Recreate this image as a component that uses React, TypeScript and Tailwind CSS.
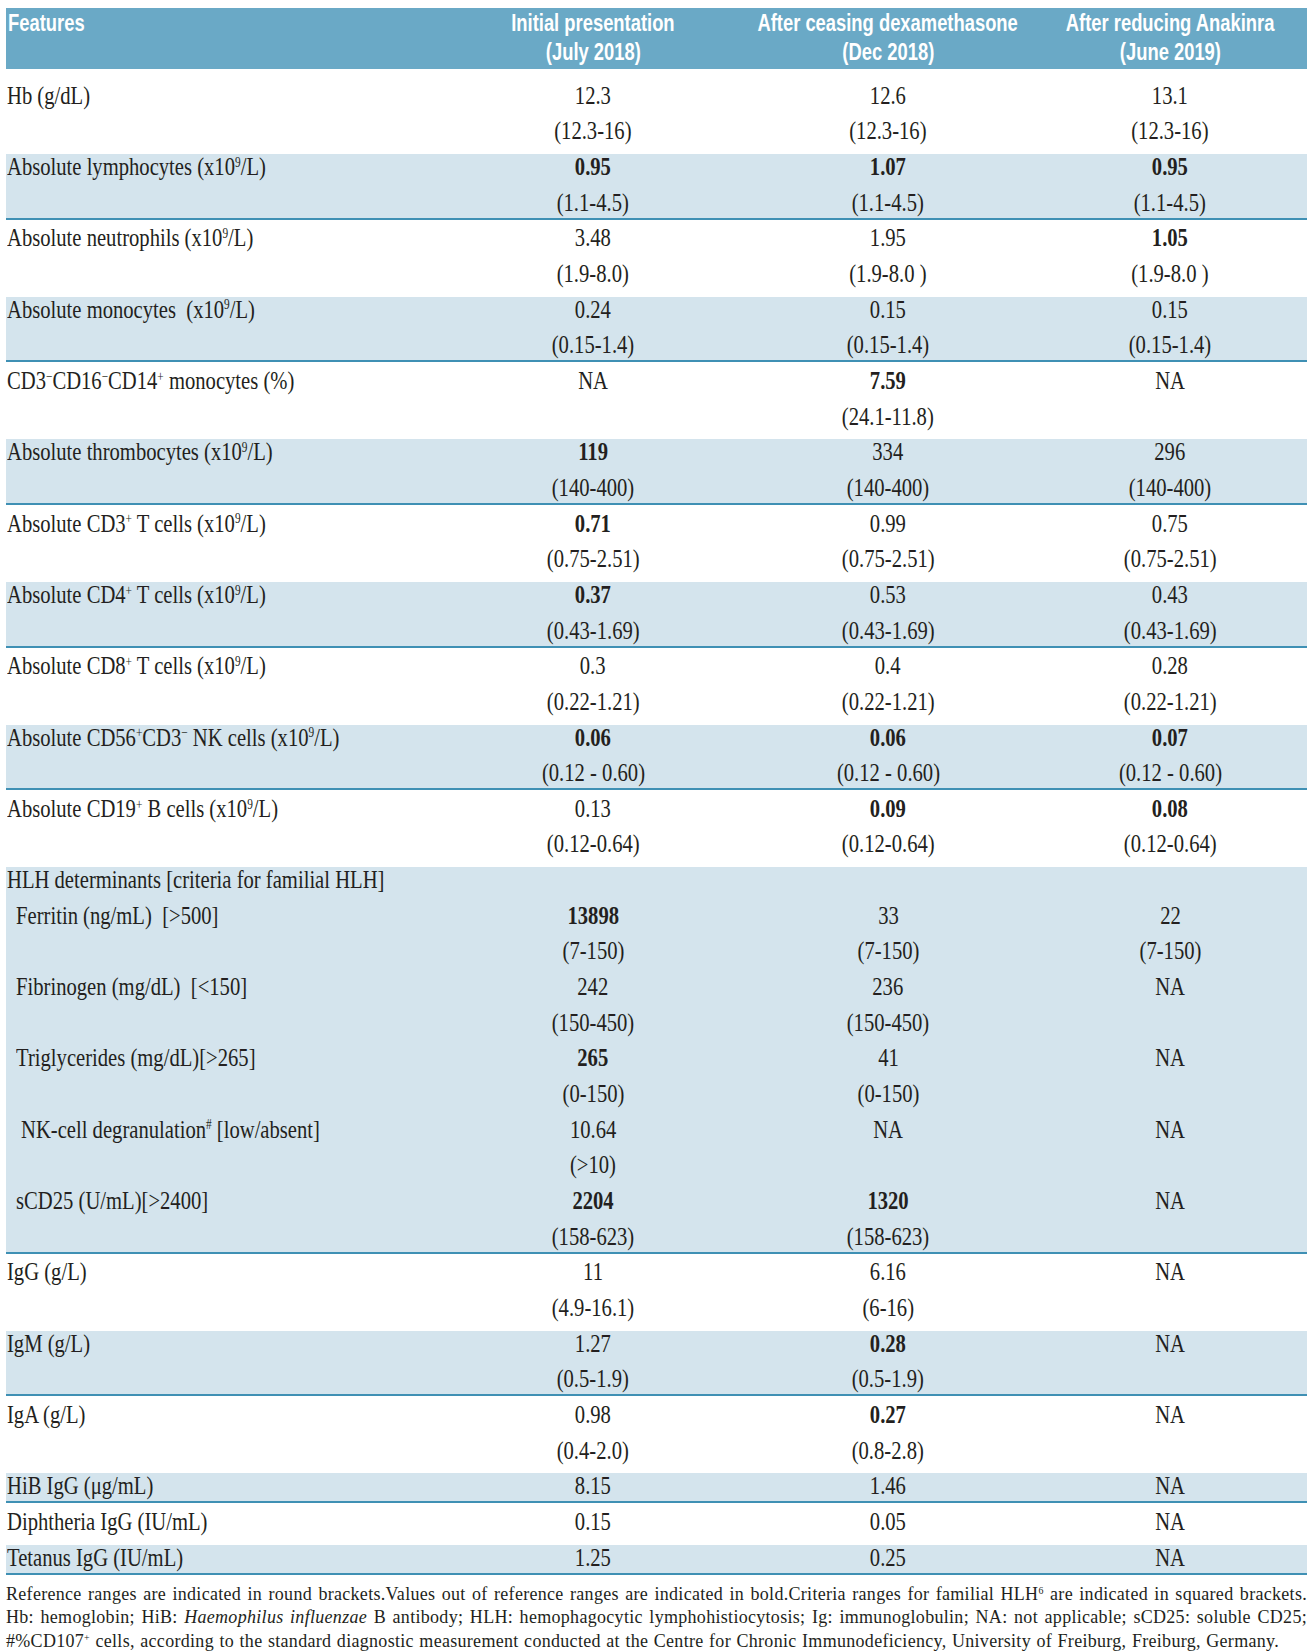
import React from "react";

type LineData = [React.ReactNode, string, string, string];
type RowData = { lines: LineData[]; blue: boolean; first?: boolean };

const Sup = ({ children }: { children: React.ReactNode }) => (
  <sup className="relative -top-[0.6em] align-baseline text-[0.55em] leading-none">{children}</sup>
);

const x109 = (
  <>
    (x10<Sup>9</Sup>/L)
  </>
);

const rows: RowData[] = [
  {
    first: true,
    blue: false,
    lines: [
      ["Hb (g/dL)", "12.3", "12.6", "13.1"],
      ["", "(12.3-16)", "(12.3-16)", "(12.3-16)"],
    ],
  },
  {
    blue: true,
    lines: [
      [<>Absolute lymphocytes {x109}</>, "*0.95", "*1.07", "*0.95"],
      ["", "(1.1-4.5)", "(1.1-4.5)", "(1.1-4.5)"],
    ],
  },
  {
    blue: false,
    lines: [
      [<>Absolute neutrophils {x109}</>, "3.48", "1.95", "*1.05"],
      ["", "(1.9-8.0)", "(1.9-8.0 )", "(1.9-8.0 )"],
    ],
  },
  {
    blue: true,
    lines: [
      [<>Absolute monocytes&nbsp; {x109}</>, "0.24", "0.15", "0.15"],
      ["", "(0.15-1.4)", "(0.15-1.4)", "(0.15-1.4)"],
    ],
  },
  {
    blue: false,
    lines: [
      [
        <>
          CD3<Sup>−</Sup>CD16<Sup>−</Sup>CD14<Sup>+</Sup> monocytes (%)
        </>,
        "NA",
        "*7.59",
        "NA",
      ],
      ["", "", "(24.1-11.8)", ""],
    ],
  },
  {
    blue: true,
    lines: [
      [<>Absolute thrombocytes {x109}</>, "*119", "334", "296"],
      ["", "(140-400)", "(140-400)", "(140-400)"],
    ],
  },
  {
    blue: false,
    lines: [
      [<>Absolute CD3<Sup>+</Sup> T cells {x109}</>, "*0.71", "0.99", "0.75"],
      ["", "(0.75-2.51)", "(0.75-2.51)", "(0.75-2.51)"],
    ],
  },
  {
    blue: true,
    lines: [
      [<>Absolute CD4<Sup>+</Sup> T cells {x109}</>, "*0.37", "0.53", "0.43"],
      ["", "(0.43-1.69)", "(0.43-1.69)", "(0.43-1.69)"],
    ],
  },
  {
    blue: false,
    lines: [
      [<>Absolute CD8<Sup>+</Sup> T cells {x109}</>, "0.3", "0.4", "0.28"],
      ["", "(0.22-1.21)", "(0.22-1.21)", "(0.22-1.21)"],
    ],
  },
  {
    blue: true,
    lines: [
      [
        <>
          Absolute CD56<Sup>+</Sup>CD3<Sup>−</Sup> NK cells {x109}
        </>,
        "*0.06",
        "*0.06",
        "*0.07",
      ],
      ["", "(0.12 - 0.60)", "(0.12 - 0.60)", "(0.12 - 0.60)"],
    ],
  },
  {
    blue: false,
    lines: [
      [<>Absolute CD19<Sup>+</Sup> B cells {x109}</>, "0.13", "*0.09", "*0.08"],
      ["", "(0.12-0.64)", "(0.12-0.64)", "(0.12-0.64)"],
    ],
  },
  {
    blue: true,
    lines: [
      ["HLH determinants [criteria for familial HLH]", "", "", ""],
      [<span className="pl-[11px]">Ferritin (ng/mL)&nbsp; [&gt;500]</span>, "*13898", "33", "22"],
      ["", "(7-150)", "(7-150)", "(7-150)"],
      [<span className="pl-[11px]">Fibrinogen (mg/dL)&nbsp; [&lt;150]</span>, "242", "236", "NA"],
      ["", "(150-450)", "(150-450)", ""],
      [<span className="pl-[11px]">Triglycerides (mg/dL)[&gt;265]</span>, "*265", "41", "NA"],
      ["", "(0-150)", "(0-150)", ""],
      [
        <span className="pl-[17px]">
          NK-cell degranulation<Sup>#</Sup> [low/absent]
        </span>,
        "10.64",
        "NA",
        "NA",
      ],
      ["", "(>10)", "", ""],
      [<span className="pl-[11px]">sCD25 (U/mL)[&gt;2400]</span>, "*2204", "*1320", "NA"],
      ["", "(158-623)", "(158-623)", ""],
    ],
  },
  {
    blue: false,
    lines: [
      ["IgG (g/L)", "11", "6.16", "NA"],
      ["", "(4.9-16.1)", "(6-16)", ""],
    ],
  },
  {
    blue: true,
    lines: [
      ["IgM (g/L)", "1.27", "*0.28", "NA"],
      ["", "(0.5-1.9)", "(0.5-1.9)", ""],
    ],
  },
  {
    blue: false,
    lines: [
      ["IgA (g/L)", "0.98", "*0.27", "NA"],
      ["", "(0.4-2.0)", "(0.8-2.8)", ""],
    ],
  },
  { blue: true, lines: [["HiB IgG (μg/mL)", "8.15", "1.46", "NA"]] },
  { blue: false, lines: [["Diphtheria IgG (IU/mL)", "0.15", "0.05", "NA"]] },
  { blue: true, lines: [["Tetanus IgG (IU/mL)", "1.25", "0.25", "NA"]] },
];

const GRID = "grid grid-cols-[437px_300px_290px_274px]";

function ValueCell({ v }: { v: string }) {
  const bold = v.startsWith("*");
  const text = bold ? v.slice(1) : v;
  return (
    <div className="text-center whitespace-nowrap">
      {text ? (
        <span
          className={
            bold
              ? "inline-block origin-center scale-x-[0.825] font-bold"
              : "inline-block origin-center scale-x-[0.825]"
          }
        >
          {text}
        </span>
      ) : null}
    </div>
  );
}

function Line({ line }: { line: LineData }) {
  return (
    <div className={`${GRID} h-[26px] leading-[26px]`}>
      <div className="whitespace-nowrap pl-[1px]">
        <span className="inline-block origin-left scale-x-[0.825]">{line[0]}</span>
      </div>
      <ValueCell v={line[1]} />
      <ValueCell v={line[2]} />
      <ValueCell v={line[3]} />
    </div>
  );
}

function Row({ row }: { row: RowData }) {
  const cls = row.blue
    ? "bg-[#d4e4ed] border-b-2 border-[#3f90b4] pb-[2px]"
    : row.first
    ? "pt-[13.3px] pb-[9.67px]"
    : "pt-[5.67px] pb-[9.67px]";
  return (
    <div className={cls}>
      <div className="flex flex-col gap-[9.67px]">
        {row.lines.map((l, i) => (
          <Line key={i} line={l} />
        ))}
      </div>
    </div>
  );
}

function HeadCell({ a, b }: { a: string; b: string }) {
  return (
    <div className="flex flex-col items-center">
      <span className="inline-block origin-center scale-x-[0.75] whitespace-nowrap">{a}</span>
      <span className="inline-block origin-center scale-x-[0.75] whitespace-nowrap">{b}</span>
    </div>
  );
}

export default function App() {
  return (
    <div className="min-h-[1651px] bg-white pt-[8.4px] pl-[6px] text-[#231f20]">
      <div className="w-[1301px]">
        <div
          className={`${GRID} h-[61px] bg-[#6aa9c6] text-white font-bold text-[24.5px] leading-[29px] [font-family:'Liberation_Sans',Arial,sans-serif]`}
        >
          <div className="pl-[2px]">
            <span className="inline-block origin-left scale-x-[0.75]">Features</span>
          </div>
          <HeadCell a="Initial presentation" b="(July 2018)" />
          <HeadCell a="After ceasing dexamethasone" b="(Dec 2018)" />
          <HeadCell a="After reducing Anakinra" b="(June 2019)" />
        </div>
        <div className="text-[25px] [font-family:'Liberation_Serif','Times_New_Roman',serif]">
          {rows.map((r, i) => (
            <Row key={i} row={r} />
          ))}
        </div>
        <div className="mt-[8px] text-[18px] leading-[23.5px] tracking-[0.3px] [font-family:'Liberation_Serif','Times_New_Roman',serif]">
          <div className="text-justify [text-align-last:justify]">
            Reference ranges are indicated in round brackets.Values out of reference ranges are indicated in bold.Criteria ranges for familial HLH<Sup>6</Sup> are indicated in squared brackets.
          </div>
          <div className="text-justify [text-align-last:justify]">
            Hb: hemoglobin; HiB: <i>Haemophilus influenzae</i> B antibody; HLH: hemophagocytic lymphohistiocytosis; Ig: immunoglobulin; NA: not applicable; sCD25: soluble CD25;
          </div>
          <div className="pr-[28px] text-justify [text-align-last:justify]">
            #%CD107<Sup>+</Sup> cells, according to the standard diagnostic measurement conducted at the Centre for Chronic Immunodeficiency, University of Freiburg, Freiburg, Germany.
          </div>
        </div>
      </div>
    </div>
  );
}
